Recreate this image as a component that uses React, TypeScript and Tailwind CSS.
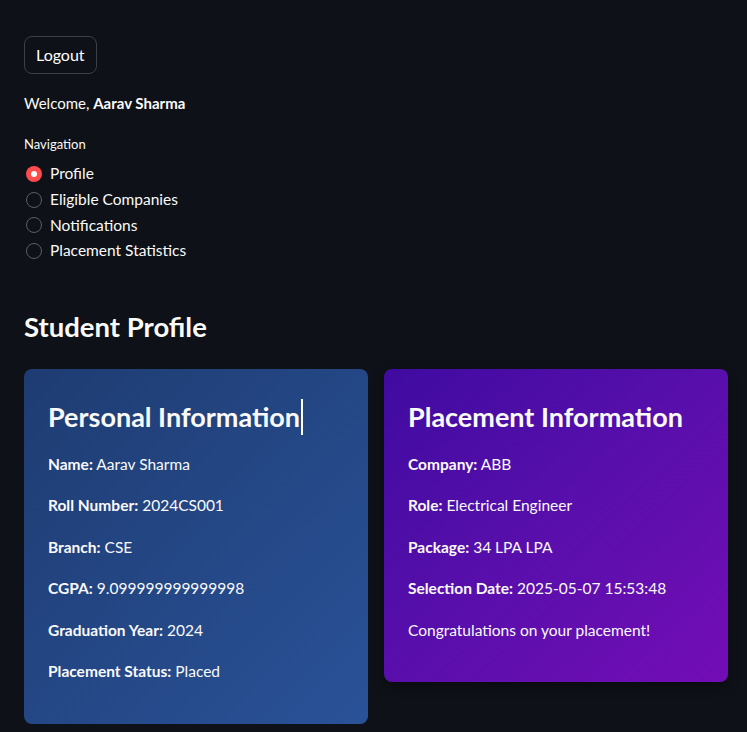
import React from 'react';

const navItems = ['Profile', 'Eligible Companies', 'Notifications', 'Placement Statistics'];

function Row({ label, value }: { label: string; value: string }) {
  return (
    <p className="text-[15.5px] leading-[26px] mb-[15.5px]">
      <span className="font-bold">{label}:</span> {value}
    </p>
  );
}

export default function App() {
  return (
    <div
      className="min-h-[732px] bg-[#0e1117] text-[#fafafa] pl-6 pr-[19px] pt-9 pb-2"
      style={{ fontFamily: 'Lato, "Noto Sans", sans-serif' }}
    >
      <button className="h-[38px] px-[11px] rounded-lg border border-[#3d4048] bg-[#0e1117] text-[16px] text-white">
        Logout
      </button>

      <p className="mt-[17px] text-[15px] leading-6">
        Welcome, <span className="font-bold">Aarav Sharma</span>
      </p>

      <p className="mt-[19px] text-[13px] leading-5">Navigation</p>
      <div className="mt-[7px] flex flex-col">
        {navItems.map((item, i) => (
          <label key={item} className="flex items-center gap-2 h-[25.7px] text-[15.5px]">
            {i === 0 ? (
              <span className="w-4 h-4 rounded-full bg-[#ff4b4b] flex items-center justify-center ml-[2px]">
                <span className="w-[6px] h-[6px] rounded-full bg-white" />
              </span>
            ) : (
              <span className="w-4 h-4 rounded-full border border-[#5b5e66] ml-[2px]" />
            )}
            <span>{item}</span>
          </label>
        ))}
      </div>

      <h2 className="mt-[43px] text-[27.5px] font-bold leading-10">Student Profile</h2>

      <div className="mt-[22px] grid grid-cols-2 gap-4 items-start">
        <div className="rounded-lg bg-gradient-to-br from-[#1e3c72] to-[#2a5298] px-6 pt-[28px] pb-[24px]">
          <h3 className="text-[27px] font-bold leading-10 mb-[14px] flex items-center">
            Personal Information
            <span className="inline-block w-[2px] h-[36px] bg-white ml-[1px]" />
          </h3>
          <Row label="Name" value="Aarav Sharma" />
          <Row label="Roll Number" value="2024CS001" />
          <Row label="Branch" value="CSE" />
          <Row label="CGPA" value="9.099999999999998" />
          <Row label="Graduation Year" value="2024" />
          <Row label="Placement Status" value="Placed" />
        </div>
        <div className="rounded-lg bg-gradient-to-br from-[#3f0aa0] to-[#730cb6] px-6 pt-[28px] pb-[24px] shadow-[0_4px_12px_rgba(0,0,0,0.4)]">
          <h3 className="text-[27px] font-bold leading-10 mb-[14px]">Placement Information</h3>
          <Row label="Company" value="ABB" />
          <Row label="Role" value="Electrical Engineer" />
          <Row label="Package" value="34 LPA LPA" />
          <Row label="Selection Date" value="2025-05-07 15:53:48" />
          <p className="text-[15.5px] leading-[26px] mb-[15.5px]">Congratulations on your placement!</p>
        </div>
      </div>
    </div>
  );
}
